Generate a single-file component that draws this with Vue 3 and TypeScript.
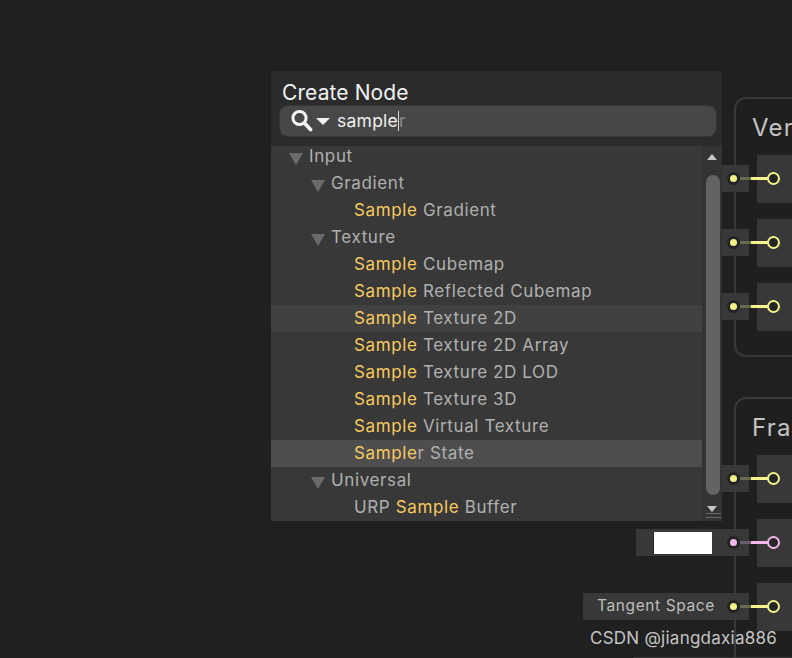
<script setup lang="ts">
interface Row {
  depth: number
  arrow?: boolean
  parts: { text: string; hit?: boolean }[]
  tone?: 'hover' | 'selected'
}

const s = (text: string) => ({ text, hit: true })
const t = (text: string) => ({ text })

const rows: Row[] = [
  { depth: 0, arrow: true, parts: [t('Input')] },
  { depth: 1, arrow: true, parts: [t('Gradient')] },
  { depth: 2, parts: [s('Sample'), t(' Gradient')] },
  { depth: 1, arrow: true, parts: [t('Texture')] },
  { depth: 2, parts: [s('Sample'), t(' Cubemap')] },
  { depth: 2, parts: [s('Sample'), t(' Reflected Cubemap')] },
  { depth: 2, parts: [s('Sample'), t(' Texture 2D')], tone: 'hover' },
  { depth: 2, parts: [s('Sample'), t(' Texture 2D Array')] },
  { depth: 2, parts: [s('Sample'), t(' Texture 2D LOD')] },
  { depth: 2, parts: [s('Sample'), t(' Texture 3D')] },
  { depth: 2, parts: [s('Sample'), t(' Virtual Texture')] },
  { depth: 2, parts: [s('Sample'), t('r State')], tone: 'selected' },
  { depth: 1, arrow: true, parts: [t('Universal')] },
  { depth: 2, parts: [t('URP '), s('Sample'), t(' Buffer')] },
]

const ports = [
  { y: 155, color: '#f4f48a' },
  { y: 219, color: '#f4f48a' },
  { y: 283, color: '#f4f48a' },
  { y: 455, color: '#f4f48a' },
  { y: 519, color: '#f4b8ee', swatch: true },
  { y: 583, color: '#f4f48a', label: 'Tangent Space' },
]
</script>

<template>
  <div class="canvas">
    <div class="context ctx-vertex"><span class="context-title">Ver</span></div>
    <div class="context ctx-fragment"><span class="context-title">Frag</span></div>

    <div v-for="p in ports" :key="p.y" class="port" :style="{ top: p.y + 'px', '--c': p.color }">
      <div class="block"></div>
      <div class="slot-input" :class="{ wide: p.swatch, label: p.label }">
        <span v-if="p.label" class="slot-label">{{ p.label }}</span>
        <span v-if="p.swatch" class="swatch"></span>
      </div>
      <div class="wire-dim"></div>
      <div class="wire"></div>
      <span class="dot"></span>
      <span class="ring"></span>
    </div>
    <div class="stub"></div>

    <div class="panel">
      <div class="head">
        <div class="title">Create Node</div>
        <div class="search">
          <svg class="glass" width="22" height="24" viewBox="0 0 22 24">
            <circle cx="8.5" cy="9" r="6.6" fill="none" stroke="#f4f4f4" stroke-width="3" />
            <path d="M13.5 14 19.5 20.5" stroke="#f4f4f4" stroke-width="3.8" stroke-linecap="round" />
          </svg>
          <span class="caret"></span>
          <span class="query">sample<span class="cursor"></span><span class="ghost">r</span></span>
        </div>
      </div>
      <div class="body">
        <div class="list">
          <div v-for="(r, i) in rows" :key="i" class="row" :class="[r.tone, 'd' + r.depth]">
            <span v-if="r.arrow" class="tri"></span>
            <span class="row-text"><span v-for="(p, j) in r.parts" :key="j" :class="{ hit: p.hit }">{{ p.text }}</span></span>
          </div>
        </div>
        <div class="scroll">
          <span class="up"></span>
          <div class="thumb"></div>
          <span class="down"></span>
          <span class="grip"></span>
        </div>
      </div>
    </div>

    <div class="mark">CSDN @jiangdaxia886</div>
  </div>
</template>

<style>
html, body { margin: 0; background: #202020; }
</style>

<style scoped>
.canvas {
  position: relative;
  width: 792px;
  height: 658px;
  overflow: hidden;
  background: #202020;
  font-family: Inter, "Noto Sans", sans-serif;
}

.context {
  position: absolute;
  left: 734px;
  width: 90px;
  box-sizing: border-box;
  border: 2px solid #383838;
  border-radius: 12px;
  background: #1f1f1f;
}
.ctx-vertex { top: 97px; height: 260px; }
.ctx-fragment { top: 397px; height: 300px; }
.context-title {
  position: absolute;
  left: 16px;
  top: 15px;
  font-size: 24px;
  line-height: 28px;
  letter-spacing: 1.2px;
  color: #c4c4c4;
}

.port {
  position: absolute;
  left: 0;
  right: 0;
  height: 48px;
}
.slot-input {
  position: absolute;
  right: 43px;
  top: 10px;
  width: 28px;
  height: 27px;
  background: #383838;
}
.slot-input.wide { width: 113px; }
.slot-input.label { width: 166px; }
.slot-label {
  position: absolute;
  left: 14px;
  top: 0;
  font-size: 15.5px;
  line-height: 26px;
  letter-spacing: 0.6px;
  white-space: nowrap;
  color: #bdbdbd;
}
.swatch {
  position: absolute;
  left: 18px;
  top: 3px;
  width: 58px;
  height: 22px;
  background: #fff;
  box-shadow: -1px 0 0 #222;
}
.dot {
  position: absolute;
  left: 730px;
  top: 20px;
  width: 7px;
  height: 7px;
  border-radius: 50%;
  background: var(--c);
  box-shadow: 0 0 0 3px #232323;
}
.wire-dim {
  position: absolute;
  left: 740px;
  top: 22px;
  width: 11px;
  height: 3px;
  background: color-mix(in srgb, var(--c) 25%, #3c3c3c);
}
.wire {
  position: absolute;
  left: 751px;
  top: 22px;
  width: 18px;
  height: 3px;
  background: var(--c);
}
.block {
  position: absolute;
  left: 757px;
  top: 0;
  width: 60px;
  height: 48px;
  background: #383838;
}
.ring {
  position: absolute;
  left: 767px;
  top: 17px;
  width: 9px;
  height: 9px;
  border: 2px solid var(--c);
  border-radius: 50%;
  background: #262626;
}

.stub {
  position: absolute;
  left: 633px;
  top: 657px;
  width: 160px;
  height: 1px;
  background: #383838;
}

.panel {
  position: absolute;
  left: 271px;
  top: 71px;
  width: 451px;
  height: 450px;
  display: flex;
  flex-direction: column;
  background: #2b2b2b;
}
.head {
  height: 75px;
  flex: none;
  box-sizing: border-box;
  padding: 9px 6px 0 9px;
}
.title {
  margin-left: 2px;
  font-size: 21px;
  line-height: 25px;
  letter-spacing: 0.1px;
  color: #f2f2f2;
}
.search {
  display: flex;
  align-items: center;
  height: 30px;
  margin-top: 1px;
  padding-left: 11px;
  border-radius: 8px;
  background: #474747;
  box-shadow: 0 0 0 1px #363636;
}
.glass { flex: none; }
.caret {
  flex: none;
  width: 0;
  height: 0;
  margin-left: 3px;
  border-left: 7px solid transparent;
  border-right: 7px solid transparent;
  border-top: 7px solid #f0f0f0;
}
.query {
  margin-left: 7px;
  font-size: 17.5px;
  line-height: 22px;
  letter-spacing: 0.25px;
  color: #f0f0f0;
}
.cursor {
  display: inline-block;
  width: 1px;
  height: 20px;
  margin-right: 0;
  vertical-align: -4px;
  background: #d8d8d8;
}
.ghost { color: #8a8a8a; }

.body {
  position: relative;
  flex: 1;
  min-height: 0;
  display: flex;
  background: #383838;
}
.list {
  flex: 1;
  min-width: 0;
  height: 375px;
  overflow: hidden;
}
.row {
  position: relative;
  height: 27px;
  display: flex;
  align-items: center;
  font-size: 17px;
  line-height: 25px;
  letter-spacing: 0.62px;
  color: #b0b0b0;
  white-space: nowrap;
}
.row:first-child { margin-top: -3px; }
.row.hover { background: #414141; }
.row.selected { background: #4e4e4e; }
.row.d0 { padding-left: 38px; }
.row.d1 { padding-left: 60px; }
.row.d2 { padding-left: 83px; }
.tri {
  position: absolute;
  margin-left: -20px;
  margin-top: 4px;
  width: 0;
  height: 0;
  border-left: 7px solid transparent;
  border-right: 7px solid transparent;
  border-top: 12px solid #6b6b6b;
}
.hit { color: #f7ca5f; }

.scroll {
  position: relative;
  flex: none;
  width: 20px;
  background: #333;
}
.up {
  position: absolute;
  left: 5px;
  top: 8px;
  border-left: 5px solid transparent;
  border-right: 5px solid transparent;
  border-bottom: 6px solid #c4c4c4;
}
.thumb {
  position: absolute;
  left: 4px;
  top: 29px;
  width: 14px;
  height: 320px;
  border-radius: 7px;
  background: #636363;
}
.down {
  position: absolute;
  left: 5px;
  top: 360px;
  border-left: 5px solid transparent;
  border-right: 5px solid transparent;
  border-top: 6px solid #c4c4c4;
}
.grip {
  position: absolute;
  left: 4px;
  top: 367px;
  width: 15px;
  height: 3px;
  border-top: 1px solid #6a6a6a;
  border-bottom: 1px solid #6a6a6a;
}

.mark {
  position: absolute;
  left: 590px;
  top: 627px;
  font-size: 17px;
  line-height: 22px;
  letter-spacing: 0.25px;
  color: #c4c4c4;
  white-space: nowrap;
}
</style>
